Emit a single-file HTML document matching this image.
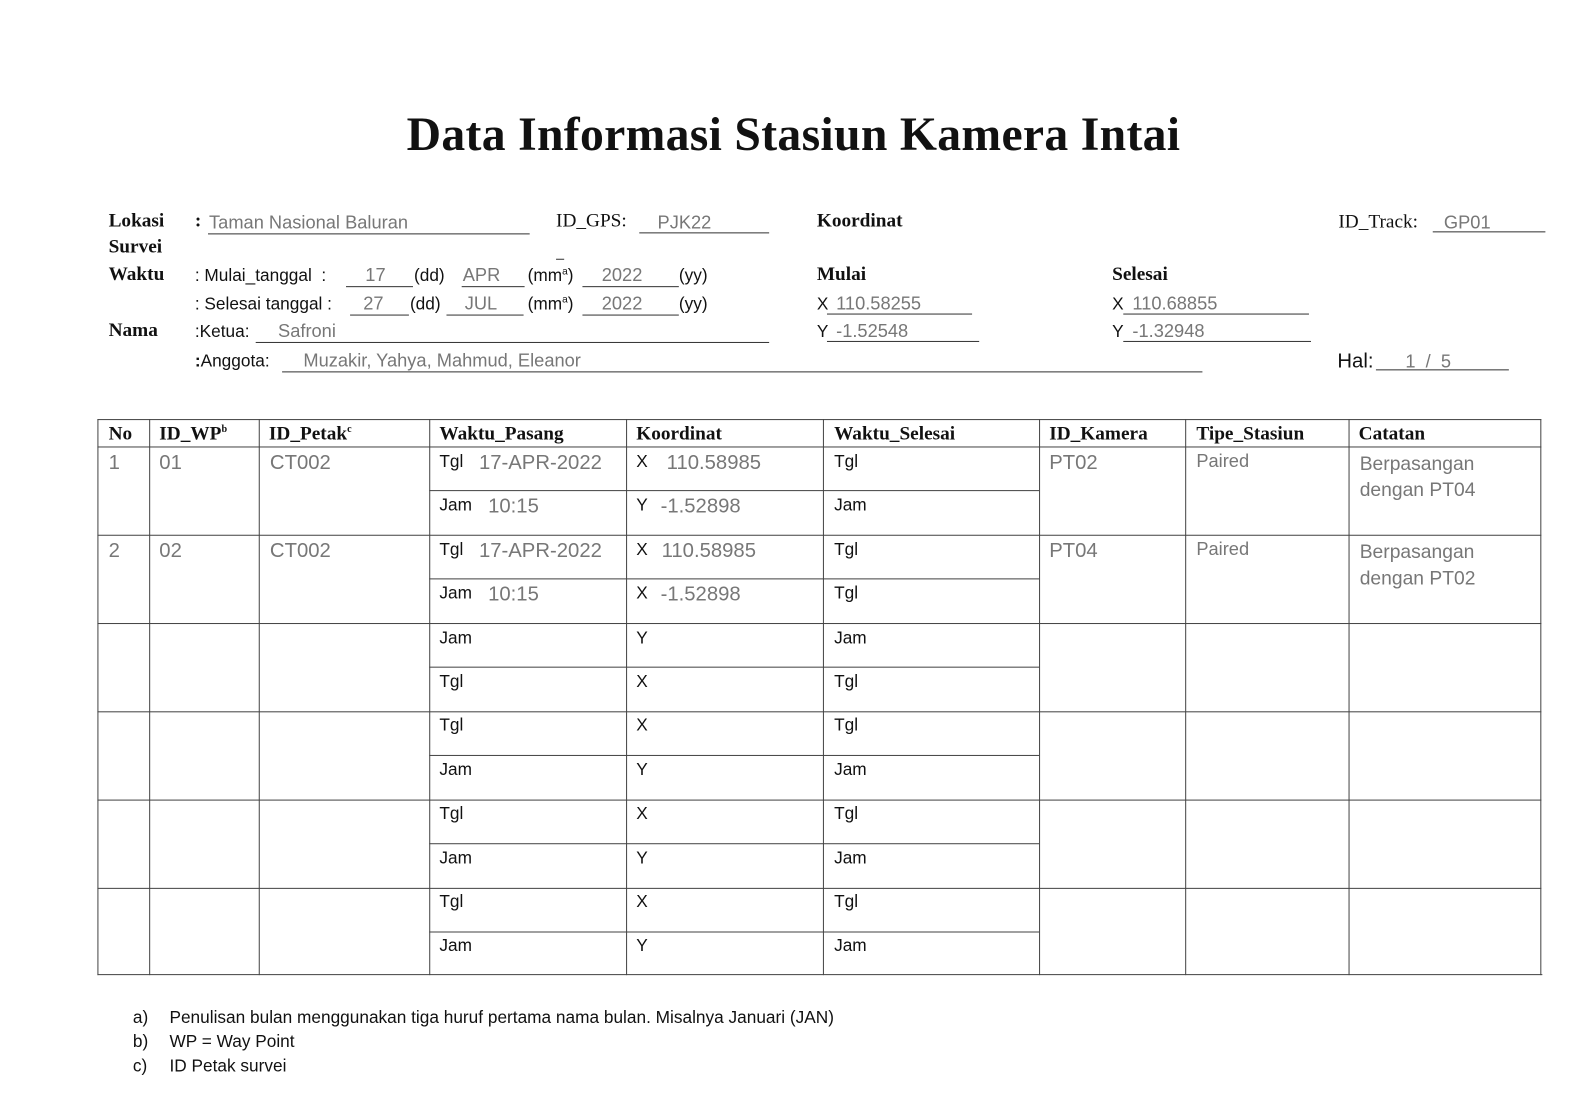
<!DOCTYPE html>
<html><head><meta charset="utf-8"><style>
body{margin:0;width:1590px;height:1111px;background:#fff;overflow:hidden;font-family:"Liberation Sans",sans-serif;color:#111}
#w{position:absolute;left:0;top:0;width:1564px;height:1093px;transform:scale(1.0147);transform-origin:0 0}
.a{position:absolute;white-space:nowrap;line-height:1}
.s{font-family:"Liberation Serif",serif;font-weight:bold;font-size:19px}
.c{font-size:17px}
.h{color:#777;font-size:18px;font-weight:normal}
.u{position:absolute;height:0;border-top:1px solid #333}
.v{position:absolute;width:0;border-left:1.5px solid #444}
.l{position:absolute;height:0;border-top:1.5px solid #444}
sup{font-size:10px}
</style></head><body><div id="w">
<div class="a" style="left:0;width:1564px;text-align:center;top:110px;font-family:'Liberation Serif',serif;font-weight:bold;font-size:47px;letter-spacing:0.3px">Data Informasi Stasiun Kamera Intai</div>

<div class="a s" style="left:107px;top:208px">Lokasi</div>
<div class="a s" style="left:107px;top:234px">Survei</div>
<div class="a s" style="left:107px;top:261px">Waktu</div>
<div class="a s" style="left:107px;top:316px">Nama</div>

<div class="a s" style="left:192px;top:208px">:</div>
<div class="a h" style="left:206px;top:210px">Taman Nasional Baluran</div><div class="u" style="left:205px;top:230px;width:317px"></div>
<div class="a" style="left:548px;top:208px;font-family:'Liberation Serif',serif;font-size:19px">ID_GPS:</div>
<div class="a h" style="left:648px;top:210px">PJK22</div><div class="u" style="left:630px;top:229px;width:128px"></div>
<div class="u" style="left:548px;top:255px;width:8px"></div>

<div class="a c" style="left:192px;top:263px">: Mulai_tanggal &nbsp;:</div>
<div class="a h" style="left:360px;top:262px">17</div><div class="u" style="left:341px;top:282px;width:66px"></div>
<div class="a c" style="left:408px;top:263px">(dd)</div>
<div class="a h" style="left:456px;top:262px">APR</div><div class="u" style="left:455px;top:282px;width:62px"></div>
<div class="a c" style="left:520px;top:263px">(mm<sup>a</sup>)</div>
<div class="a h" style="left:593px;top:262px">2022</div><div class="u" style="left:574px;top:282px;width:95px"></div>
<div class="a c" style="left:669px;top:263px">(yy)</div>

<div class="a c" style="left:192px;top:291px">: Selesai tanggal :</div>
<div class="a h" style="left:358px;top:290px">27</div><div class="u" style="left:345px;top:310px;width:58px"></div>
<div class="a c" style="left:404px;top:291px">(dd)</div>
<div class="a h" style="left:458px;top:290px">JUL</div><div class="u" style="left:440px;top:310px;width:76px"></div>
<div class="a c" style="left:520px;top:291px">(mm<sup>a</sup>)</div>
<div class="a h" style="left:593px;top:290px">2022</div><div class="u" style="left:574px;top:310px;width:95px"></div>
<div class="a c" style="left:669px;top:291px">(yy)</div>

<div class="a c" style="left:192px;top:318px">:Ketua:</div>
<div class="a h" style="left:274px;top:317px">Safroni</div><div class="u" style="left:252px;top:337px;width:506px"></div>
<div class="a c" style="left:192px;top:347px"><b>:</b>Anggota:</div>
<div class="a h" style="left:299px;top:346px">Muzakir, Yahya, Mahmud, Eleanor</div><div class="u" style="left:278px;top:366px;width:907px"></div>

<div class="a s" style="left:805px;top:208px">Koordinat</div>
<div class="a s" style="left:805px;top:261px">Mulai</div>
<div class="a s" style="left:1096px;top:261px">Selesai</div>
<div class="a c" style="left:805px;top:291px">X</div><div class="a h" style="left:824px;top:290px">110.58255</div><div class="u" style="left:815px;top:309px;width:143px"></div>
<div class="a c" style="left:805px;top:318px">Y</div><div class="a h" style="left:824px;top:317px">-1.52548</div><div class="u" style="left:815px;top:336px;width:150px"></div>
<div class="a c" style="left:1096px;top:291px">X</div><div class="a h" style="left:1116px;top:290px">110.68855</div><div class="u" style="left:1107px;top:309px;width:183px"></div>
<div class="a c" style="left:1096px;top:318px">Y</div><div class="a h" style="left:1116px;top:317px">-1.32948</div><div class="u" style="left:1107px;top:336px;width:185px"></div>
<div class="a" style="left:1319px;top:209px;font-family:'Liberation Serif',serif;font-size:19px">ID_Track:</div>
<div class="a h" style="left:1423px;top:210px">GP01</div><div class="u" style="left:1412px;top:228px;width:111px"></div>
<div class="a c" style="left:1318px;top:346px;font-size:20px">Hal:</div>
<div class="a h" style="left:1385px;top:347px">1 &nbsp;/ &nbsp;5</div><div class="u" style="left:1356px;top:364px;width:131px"></div>

<div class="l" style="left:96px;top:413px;width:1423px"></div>
<div class="l" style="left:96px;top:440px;width:1423px"></div>
<div class="l" style="left:96px;top:527px;width:1423px"></div>
<div class="l" style="left:96px;top:614px;width:1423px"></div>
<div class="l" style="left:96px;top:701px;width:1423px"></div>
<div class="l" style="left:96px;top:788px;width:1423px"></div>
<div class="l" style="left:96px;top:875px;width:1423px"></div>
<div class="l" style="left:96px;top:960px;width:1424px"></div>
<div class="l" style="left:423px;top:483px;width:601px"></div>
<div class="l" style="left:423px;top:570px;width:601px"></div>
<div class="l" style="left:423px;top:657px;width:601px"></div>
<div class="l" style="left:423px;top:744px;width:601px"></div>
<div class="l" style="left:423px;top:831px;width:601px"></div>
<div class="l" style="left:423px;top:918px;width:601px"></div>
<div class="v" style="left:96px;top:413px;height:548px"></div>
<div class="v" style="left:147px;top:413px;height:548px"></div>
<div class="v" style="left:255px;top:413px;height:548px"></div>
<div class="v" style="left:423px;top:413px;height:548px"></div>
<div class="v" style="left:617px;top:413px;height:548px"></div>
<div class="v" style="left:811px;top:413px;height:548px"></div>
<div class="v" style="left:1024px;top:413px;height:548px"></div>
<div class="v" style="left:1168px;top:413px;height:548px"></div>
<div class="v" style="left:1329px;top:413px;height:548px"></div>
<div class="v" style="left:1518px;top:413px;height:548px"></div>

<div class="a s" style="left:107px;top:418px">No</div>
<div class="a s" style="left:157px;top:418px">ID_WP<sup>b</sup></div>
<div class="a s" style="left:265px;top:418px">ID_Petak<sup>c</sup></div>
<div class="a s" style="left:433px;top:418px">Waktu_Pasang</div>
<div class="a s" style="left:627px;top:418px">Koordinat</div>
<div class="a s" style="left:822px;top:418px">Waktu_Selesai</div>
<div class="a s" style="left:1034px;top:418px">ID_Kamera</div>
<div class="a s" style="left:1179px;top:418px">Tipe_Stasiun</div>
<div class="a s" style="left:1339px;top:418px">Catatan</div>

<div class="a h" style="left:107px;top:446px;font-size:20px">1</div>
<div class="a h" style="left:157px;top:446px;font-size:20px">01</div>
<div class="a h" style="left:266px;top:446px;font-size:20px">CT002</div>
<div class="a c" style="left:433px;top:446px">Tgl</div><div class="a h" style="left:472px;top:446px;font-size:20px">17-APR-2022</div>
<div class="a c" style="left:627px;top:446px">X</div><div class="a h" style="left:657px;top:446px;font-size:20px">110.58985</div>
<div class="a c" style="left:822px;top:446px">Tgl</div>
<div class="a h" style="left:1034px;top:446px;font-size:20px">PT02</div>
<div class="a h" style="left:1179px;top:445px">Paired</div>
<div class="a h" style="left:1340px;top:445px;line-height:26px;font-size:19px">Berpasangan<br>dengan PT04</div>
<div class="a c" style="left:433px;top:489px">Jam</div><div class="a h" style="left:481px;top:489px;font-size:20px">10:15</div>
<div class="a c" style="left:627px;top:489px">Y</div><div class="a h" style="left:651px;top:489px;font-size:20px">-1.52898</div>
<div class="a c" style="left:822px;top:489px">Jam</div>

<div class="a h" style="left:107px;top:533px;font-size:20px">2</div>
<div class="a h" style="left:157px;top:533px;font-size:20px">02</div>
<div class="a h" style="left:266px;top:533px;font-size:20px">CT002</div>
<div class="a c" style="left:433px;top:533px">Tgl</div><div class="a h" style="left:472px;top:533px;font-size:20px">17-APR-2022</div>
<div class="a c" style="left:627px;top:533px">X</div><div class="a h" style="left:652px;top:533px;font-size:20px">110.58985</div>
<div class="a c" style="left:822px;top:533px">Tgl</div>
<div class="a h" style="left:1034px;top:533px;font-size:20px">PT04</div>
<div class="a h" style="left:1179px;top:532px">Paired</div>
<div class="a h" style="left:1340px;top:532px;line-height:26px;font-size:19px">Berpasangan<br>dengan PT02</div>
<div class="a c" style="left:433px;top:576px">Jam</div><div class="a h" style="left:481px;top:576px;font-size:20px">10:15</div>
<div class="a c" style="left:627px;top:576px">X</div><div class="a h" style="left:651px;top:576px;font-size:20px">-1.52898</div>
<div class="a c" style="left:822px;top:576px">Tgl</div>

<div class="a c" style="left:433px;top:620px">Jam</div><div class="a c" style="left:627px;top:620px">Y</div><div class="a c" style="left:822px;top:620px">Jam</div>
<div class="a c" style="left:433px;top:663px">Tgl</div><div class="a c" style="left:627px;top:663px">X</div><div class="a c" style="left:822px;top:663px">Tgl</div>
<div class="a c" style="left:433px;top:706px">Tgl</div><div class="a c" style="left:627px;top:706px">X</div><div class="a c" style="left:822px;top:706px">Tgl</div>
<div class="a c" style="left:433px;top:750px">Jam</div><div class="a c" style="left:627px;top:750px">Y</div><div class="a c" style="left:822px;top:750px">Jam</div>
<div class="a c" style="left:433px;top:793px">Tgl</div><div class="a c" style="left:627px;top:793px">X</div><div class="a c" style="left:822px;top:793px">Tgl</div>
<div class="a c" style="left:433px;top:837px">Jam</div><div class="a c" style="left:627px;top:837px">Y</div><div class="a c" style="left:822px;top:837px">Jam</div>
<div class="a c" style="left:433px;top:880px">Tgl</div><div class="a c" style="left:627px;top:880px">X</div><div class="a c" style="left:822px;top:880px">Tgl</div>
<div class="a c" style="left:433px;top:923px">Jam</div><div class="a c" style="left:627px;top:923px">Y</div><div class="a c" style="left:822px;top:923px">Jam</div>

<div class="a c" style="left:131px;top:994px">a)</div><div class="a c" style="left:167px;top:994px">Penulisan bulan menggunakan tiga huruf pertama nama bulan. Misalnya Januari (JAN)</div>
<div class="a c" style="left:131px;top:1018px">b)</div><div class="a c" style="left:167px;top:1018px">WP = Way Point</div>
<div class="a c" style="left:131px;top:1042px">c)</div><div class="a c" style="left:167px;top:1042px">ID Petak survei</div>
</div></body></html>
